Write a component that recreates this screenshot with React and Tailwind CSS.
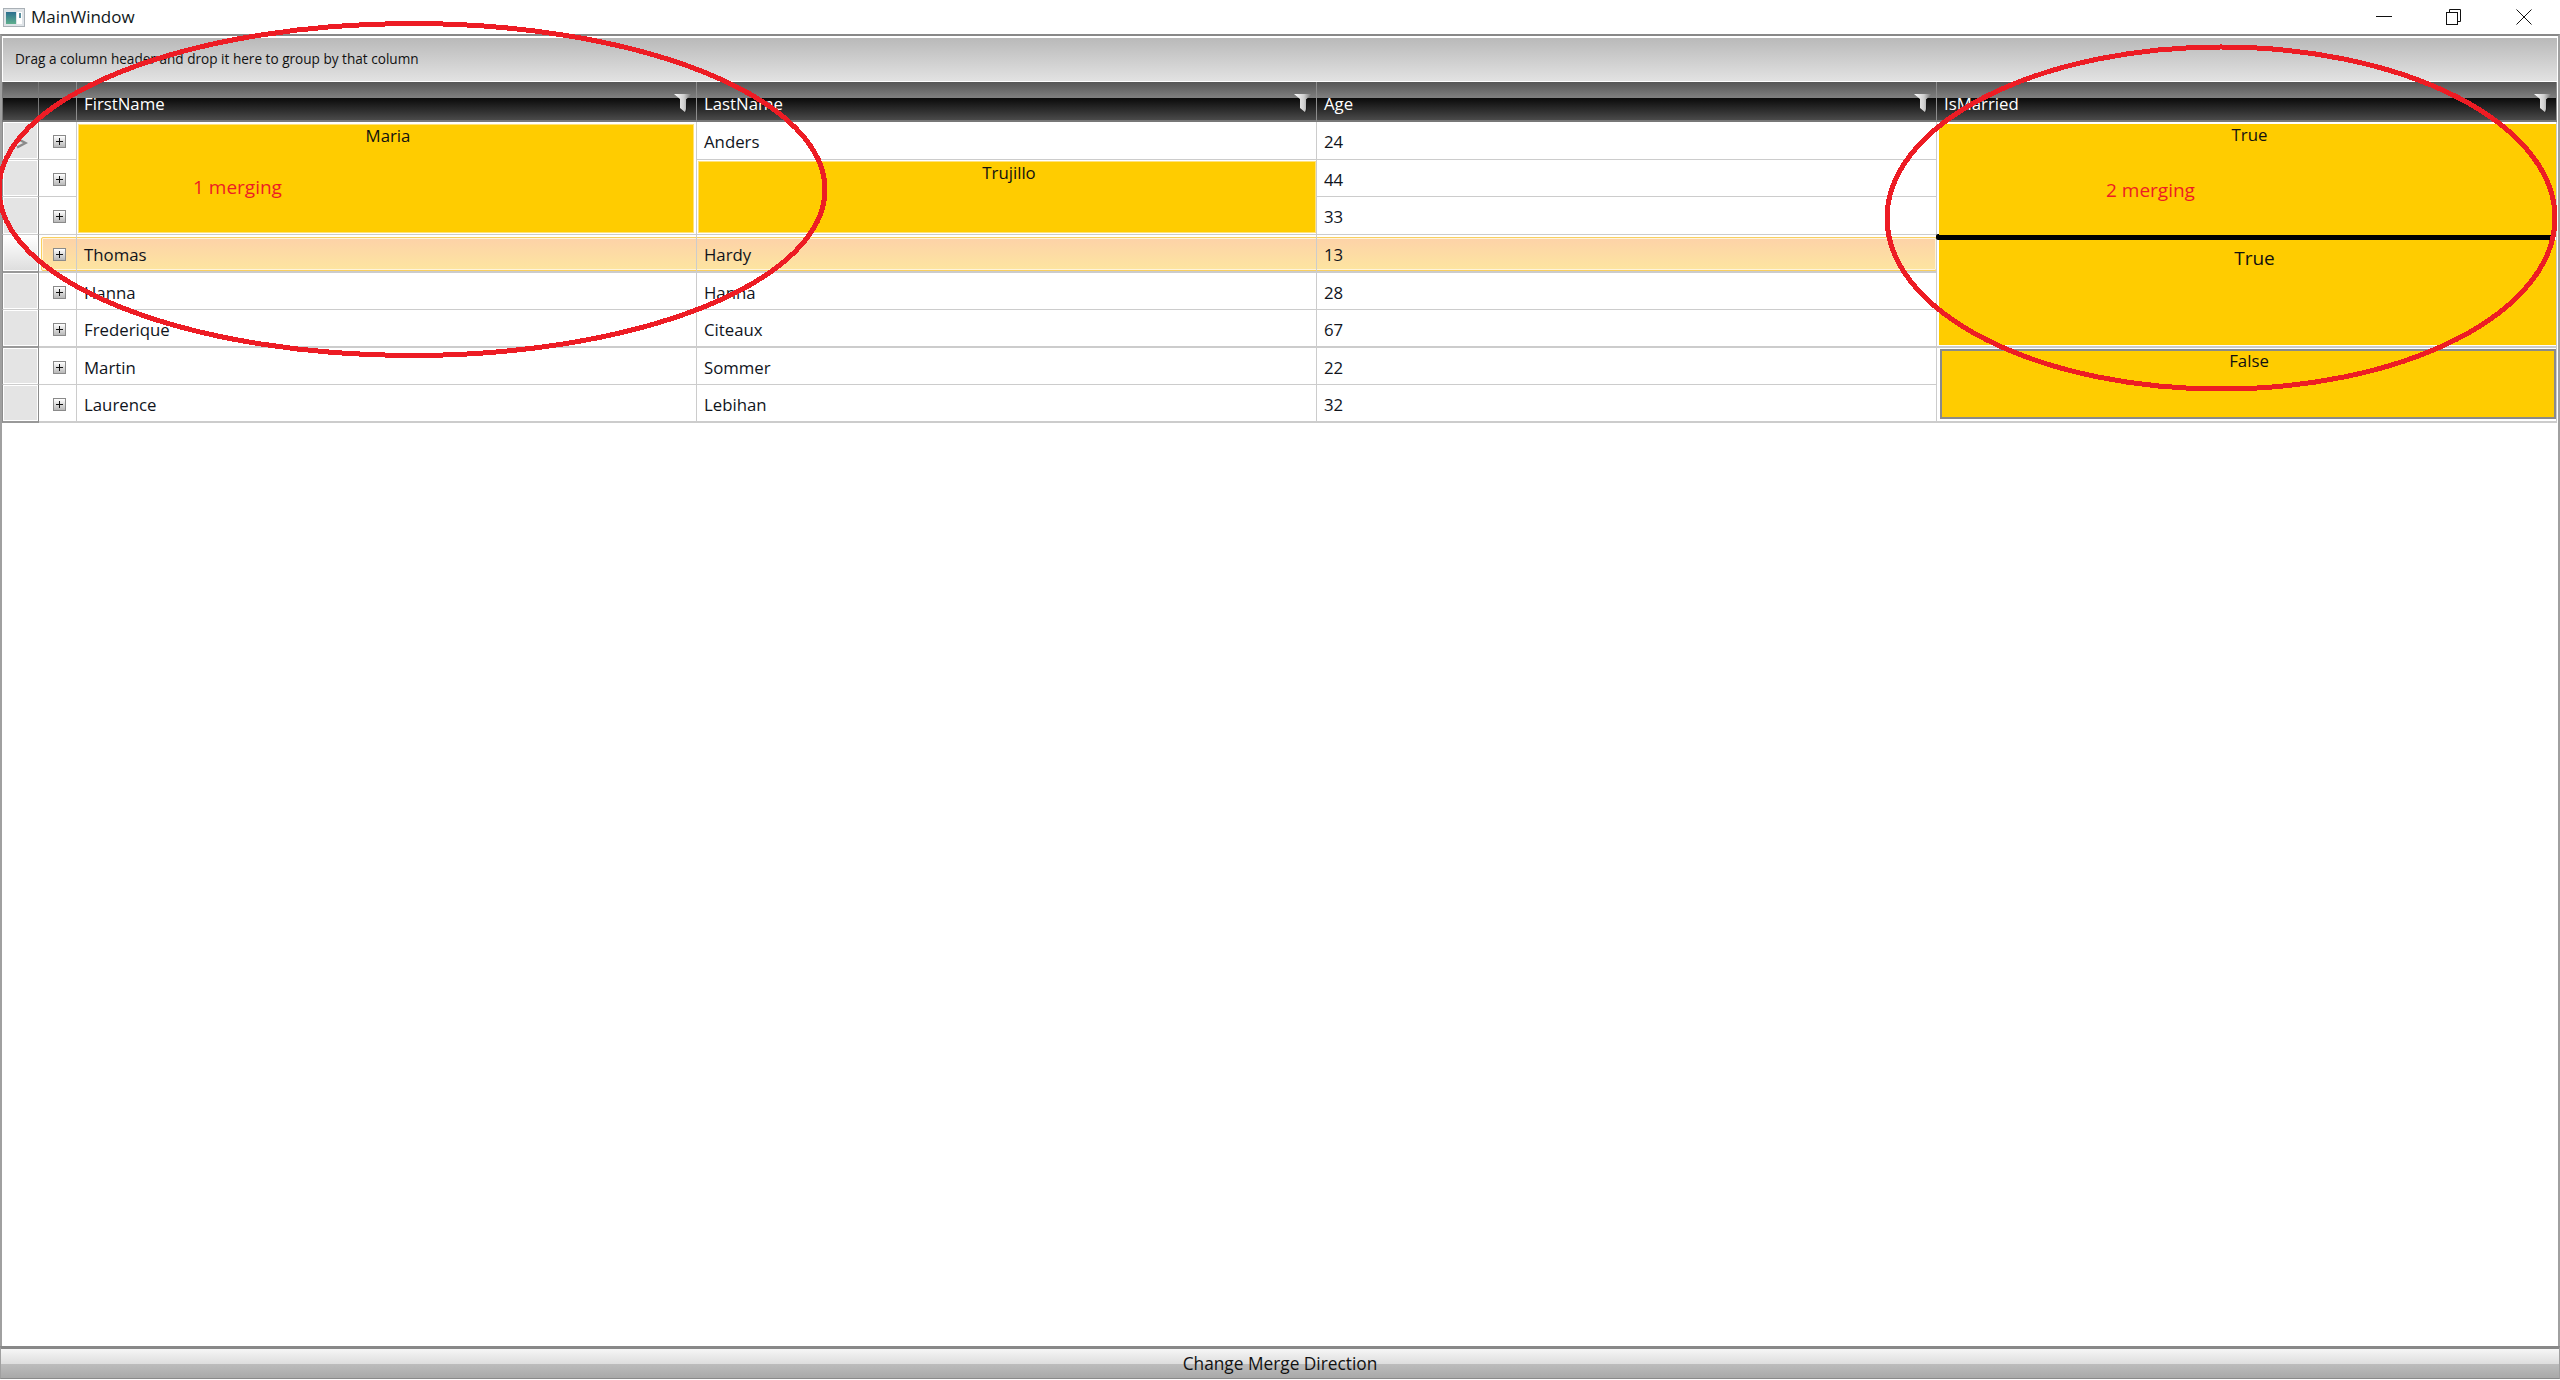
import React from "react";

const ROW = ["row-start-2","row-start-3","row-start-4","row-start-5","row-start-6","row-start-7","row-start-8","row-start-9"];
const THICK = [false,false,false,true,false,true,false,true];
const FIRST = [null,null,null,"Thomas","Hanna","Frederique","Martin","Laurence"];
const LAST = ["Anders",null,null,"Hardy","Hanna","Citeaux","Sommer","Lebihan"];
const AGE = ["24","44","33","13","28","67","22","32"];

function FilterIcon() {
  return (
    <svg width="18" height="19" viewBox="0 0 18 19" className="mt-[12px] mr-[4px] shrink-0">
      <defs>
        <linearGradient id="flt" x1="0" x2="1" y1="0" y2="0">
          <stop offset="0" stopColor="#ffffff" />
          <stop offset="0.55" stopColor="#d0d0d0" />
          <stop offset="1" stopColor="#6a6a6a" />
        </linearGradient>
      </defs>
      <path d="M0 0H18L12.5 5V15L11.5 18.5L6 14V5Z" fill="url(#flt)" />
      <path d="M12.5 5V15L11.5 18.5" fill="none" stroke="#1a1a1a" strokeWidth="1" />
    </svg>
  );
}

function Head({ label, col }) {
  return (
    <div className={`${col} row-start-1 flex justify-between border-r border-b-2 border-r-[#8c8c8c] border-b-[#777] bg-[linear-gradient(to_bottom,#565656_0%,#808080_43%,#0b0b0b_43%,#4a4a4a_100%)]`}>
      <span className="pl-[7px] pt-[11px] text-[16.8px] leading-[22px] text-white">{label}</span>
      <FilterIcon />
    </div>
  );
}

function PlusBox() {
  return (
    <div className="flex h-[13px] w-[13px] items-center justify-center border border-[#8a8a8a] bg-[linear-gradient(to_bottom,#ffffff,#b8b8b8)]">
      <svg width="9" height="9" viewBox="0 0 9 9">
        <path d="M1 4.5H8M4.5 1V8" stroke="#111" strokeWidth="1" fill="none" />
      </svg>
    </div>
  );
}

function TextCell({ col, row, thick, text }) {
  return (
    <div className={`${col} ${row} flex items-center border-r border-[#cccccc] ${thick ? "border-b-2" : "border-b"} pl-[7px] pt-[3px] text-[16.8px] text-[#10141c]`}>
      {text}
    </div>
  );
}

export default function App() {
  return (
    <div className="relative flex h-[1380px] w-[2560px] flex-col overflow-hidden bg-white font-['Open_Sans','Noto_Sans',sans-serif] text-[#111]">
      {/* title bar */}
      <div className="flex h-[34px] shrink-0 items-center pr-[28px]">
        <svg width="22" height="19" viewBox="0 0 22 19" className="ml-[3px] mr-[6px]">
          <defs>
            <linearGradient id="tic" x1="0" x2="0" y1="0" y2="1">
              <stop offset="0" stopColor="#2c6f8f" />
              <stop offset="1" stopColor="#5fb08e" />
            </linearGradient>
          </defs>
          <rect x="0.5" y="0.5" width="21" height="18" fill="#dfe4e8" stroke="#a9b0b6" />
          <rect x="3" y="4" width="10" height="12" fill="url(#tic)" />
          <rect x="14" y="4" width="5" height="12" fill="#ffffff" />
          <rect x="16" y="5" width="2" height="5" fill="#5a8f9f" />
        </svg>
        <span className="text-[17px] text-[#101820]">MainWindow</span>
        <div className="ml-auto flex items-center gap-[54px]">
          <svg width="16" height="16" viewBox="0 0 16 16"><path d="M0 7.5H16" stroke="#111" strokeWidth="1" /></svg>
          <svg width="16" height="16" viewBox="0 0 16 16" fill="none" stroke="#111" strokeWidth="1">
            <rect x="0.5" y="3.5" width="11" height="12" />
            <path d="M3.5 3.5V0.5H14.5V12.5H11.5" />
          </svg>
          <svg width="16" height="16" viewBox="0 0 16 16" fill="none" stroke="#111" strokeWidth="1"><path d="M0.5 0.5L15.5 15.5M15.5 0.5L0.5 15.5" /></svg>
        </div>
      </div>

      {/* data grid frame */}
      <div className="flex min-h-0 flex-1 flex-col border-x-2 border-t-2 border-x-[#a0a0a0] border-t-[#888888] pt-[2px]">
        <div className="mx-px flex h-[43px] shrink-0 items-center bg-[linear-gradient(to_bottom,#b9b9b9,#e2e2e2)] pl-[12px] text-[13.6px] text-[#111]">
          Drag a column header and drop it here to group by that column
        </div>
        <div className="mt-px grid grid-cols-[37px_38px_620px_620px_620px_620px] grid-rows-[40px_38px_37px_38px_38px_37px_38px_37px_38px]">
          {/* selected row highlight */}
          <div className="col-start-2 col-end-6 row-start-5 mb-[2px] ml-[2px] mt-[2px] rounded-[2px] border border-[#f9cf5f] bg-[linear-gradient(to_bottom,#fdd2a8,#fde5a0)] shadow-[inset_0_0_0_1px_#fff4dc]" />

          {/* header */}
          <div className="col-start-1 row-start-1 border-x border-b-2 border-[#777] bg-[linear-gradient(to_bottom,#565656_0%,#808080_43%,#0b0b0b_43%,#4a4a4a_100%)]" />
          <div className="col-start-2 row-start-1 border-r border-b-2 border-r-[#8c8c8c] border-b-[#777] bg-[linear-gradient(to_bottom,#565656_0%,#808080_43%,#0b0b0b_43%,#4a4a4a_100%)]" />
          <Head label="FirstName" col="col-start-3" />
          <Head label="LastName" col="col-start-4" />
          <Head label="Age" col="col-start-5" />
          <Head label="IsMarried" col="col-start-6" />

          {/* row indicator and expander columns */}
          {ROW.map((row, i) => (
            <React.Fragment key={row}>
              <div className={`col-start-1 ${row} relative border-x border-[#8c8c8c] ${THICK[i] ? "border-b-2 border-b-[#999]" : "border-b border-b-[#ccc]"} p-px`}>
                <div className={`h-full w-full ${i === 3 ? "bg-[linear-gradient(to_bottom,#ffffff,#dedede)]" : "bg-[#e4e4e4]"}`} />
                {i === 0 && (
                  <svg width="12" height="12" viewBox="0 0 12 12" className="absolute left-[13px] top-[15px]">
                    <path d="M1 1.5L9.5 6L1 10.5" fill="none" stroke="#8a8a8a" strokeWidth="2.5" />
                  </svg>
                )}
              </div>
              <div className={`col-start-2 ${row} flex items-center border-r border-[#cccccc] ${THICK[i] ? "border-b-2" : "border-b"} pl-[14px] pt-[2px]`}>
                <PlusBox />
              </div>
              {FIRST[i] && <TextCell col="col-start-3" row={row} thick={THICK[i]} text={FIRST[i]} />}
              {LAST[i] && <TextCell col="col-start-4" row={row} thick={THICK[i]} text={LAST[i]} />}
              <TextCell col="col-start-5" row={row} thick={THICK[i]} text={AGE[i]} />
            </React.Fragment>
          ))}

          {/* merged FirstName */}
          <div className="col-start-3 row-start-2 row-span-3 border-r border-b border-[#cccccc] pb-px pl-px pr-[2px] pt-[2px]">
            <div className="relative flex h-full justify-center border border-[#ffe27a] bg-[#ffcc00] pl-[4px] text-[16.8px] leading-[22px] text-[#111]">
              Maria
              <span className="absolute left-[114px] top-[50px] text-[19px] leading-[24px] text-[#ed1c24]">1 merging</span>
            </div>
          </div>

          {/* merged LastName */}
          <div className="col-start-4 row-span-2 row-start-3 border-r border-b border-[#cccccc] pb-px pl-px pt-px">
            <div className="flex h-full justify-center border border-[#ffe27a] bg-[#ffcc00] pl-[4px] text-[16.8px] leading-[22px] text-[#111]">
              Trujillo
            </div>
          </div>

          {/* merged IsMarried */}
          <div className="col-start-6 row-span-3 row-start-2 border-r border-[#cccccc] pl-[2px] pt-[2px]">
            <div className="relative flex h-full justify-center bg-[#ffcc00] pl-[4px] text-[16.8px] leading-[22px] text-[#111]">
              True
              <span className="absolute left-[167px] top-[54px] text-[19px] leading-[24px] text-[#ed1c24]">2 merging</span>
            </div>
          </div>
          <div className="col-start-6 row-span-3 row-start-5 flex flex-col border-r border-b-2 border-[#cccccc] pb-px">
            <div className="-ml-px -mt-px mr-[4px] h-[6px] shrink-0 rounded-[2px] bg-black" />
            <div className="ml-[2px] flex flex-1 justify-center bg-[#ffcc00] pl-[14px] pt-[6px] text-[19px] font-medium leading-[24px] text-[#111]">
              True
            </div>
          </div>
          <div className="col-start-6 row-span-2 row-start-8 border-r border-b-2 border-[#cccccc] pb-[2px] pl-[3px] pt-px">
            <div className="flex h-full justify-center border-2 border-[#8a8a8a] bg-[#ffcc00] pl-[2px] text-[16.8px] leading-[20px] text-[#111]">
              False
            </div>
          </div>
        </div>
      </div>

      {/* bottom button */}
      <button className="flex h-[33px] shrink-0 items-center justify-center border-x border-t-[3px] border-b border-x-[#a0a0a0] border-t-[#888888] border-b-[#8a8a8a] bg-[linear-gradient(to_bottom,#f6f6f6_0%,#dedede_50%,#bdbdbd_50%,#a9a9a9_100%)] text-[17.3px] text-[#111]">
        Change Merge Direction
      </button>
      <div className="h-px shrink-0 bg-white" />

      {/* hand-drawn annotations over the screenshot */}
      <svg width="2560" height="1380" viewBox="0 0 2560 1380" className="pointer-events-none absolute inset-0" shapeRendering="crispEdges">
        <ellipse cx="412" cy="189.5" rx="413" ry="166" fill="none" stroke="#ed1c24" strokeWidth="5" />
        <ellipse cx="2221" cy="218" rx="334" ry="171" fill="none" stroke="#ed1c24" strokeWidth="5" />
      </svg>
    </div>
  );
}
